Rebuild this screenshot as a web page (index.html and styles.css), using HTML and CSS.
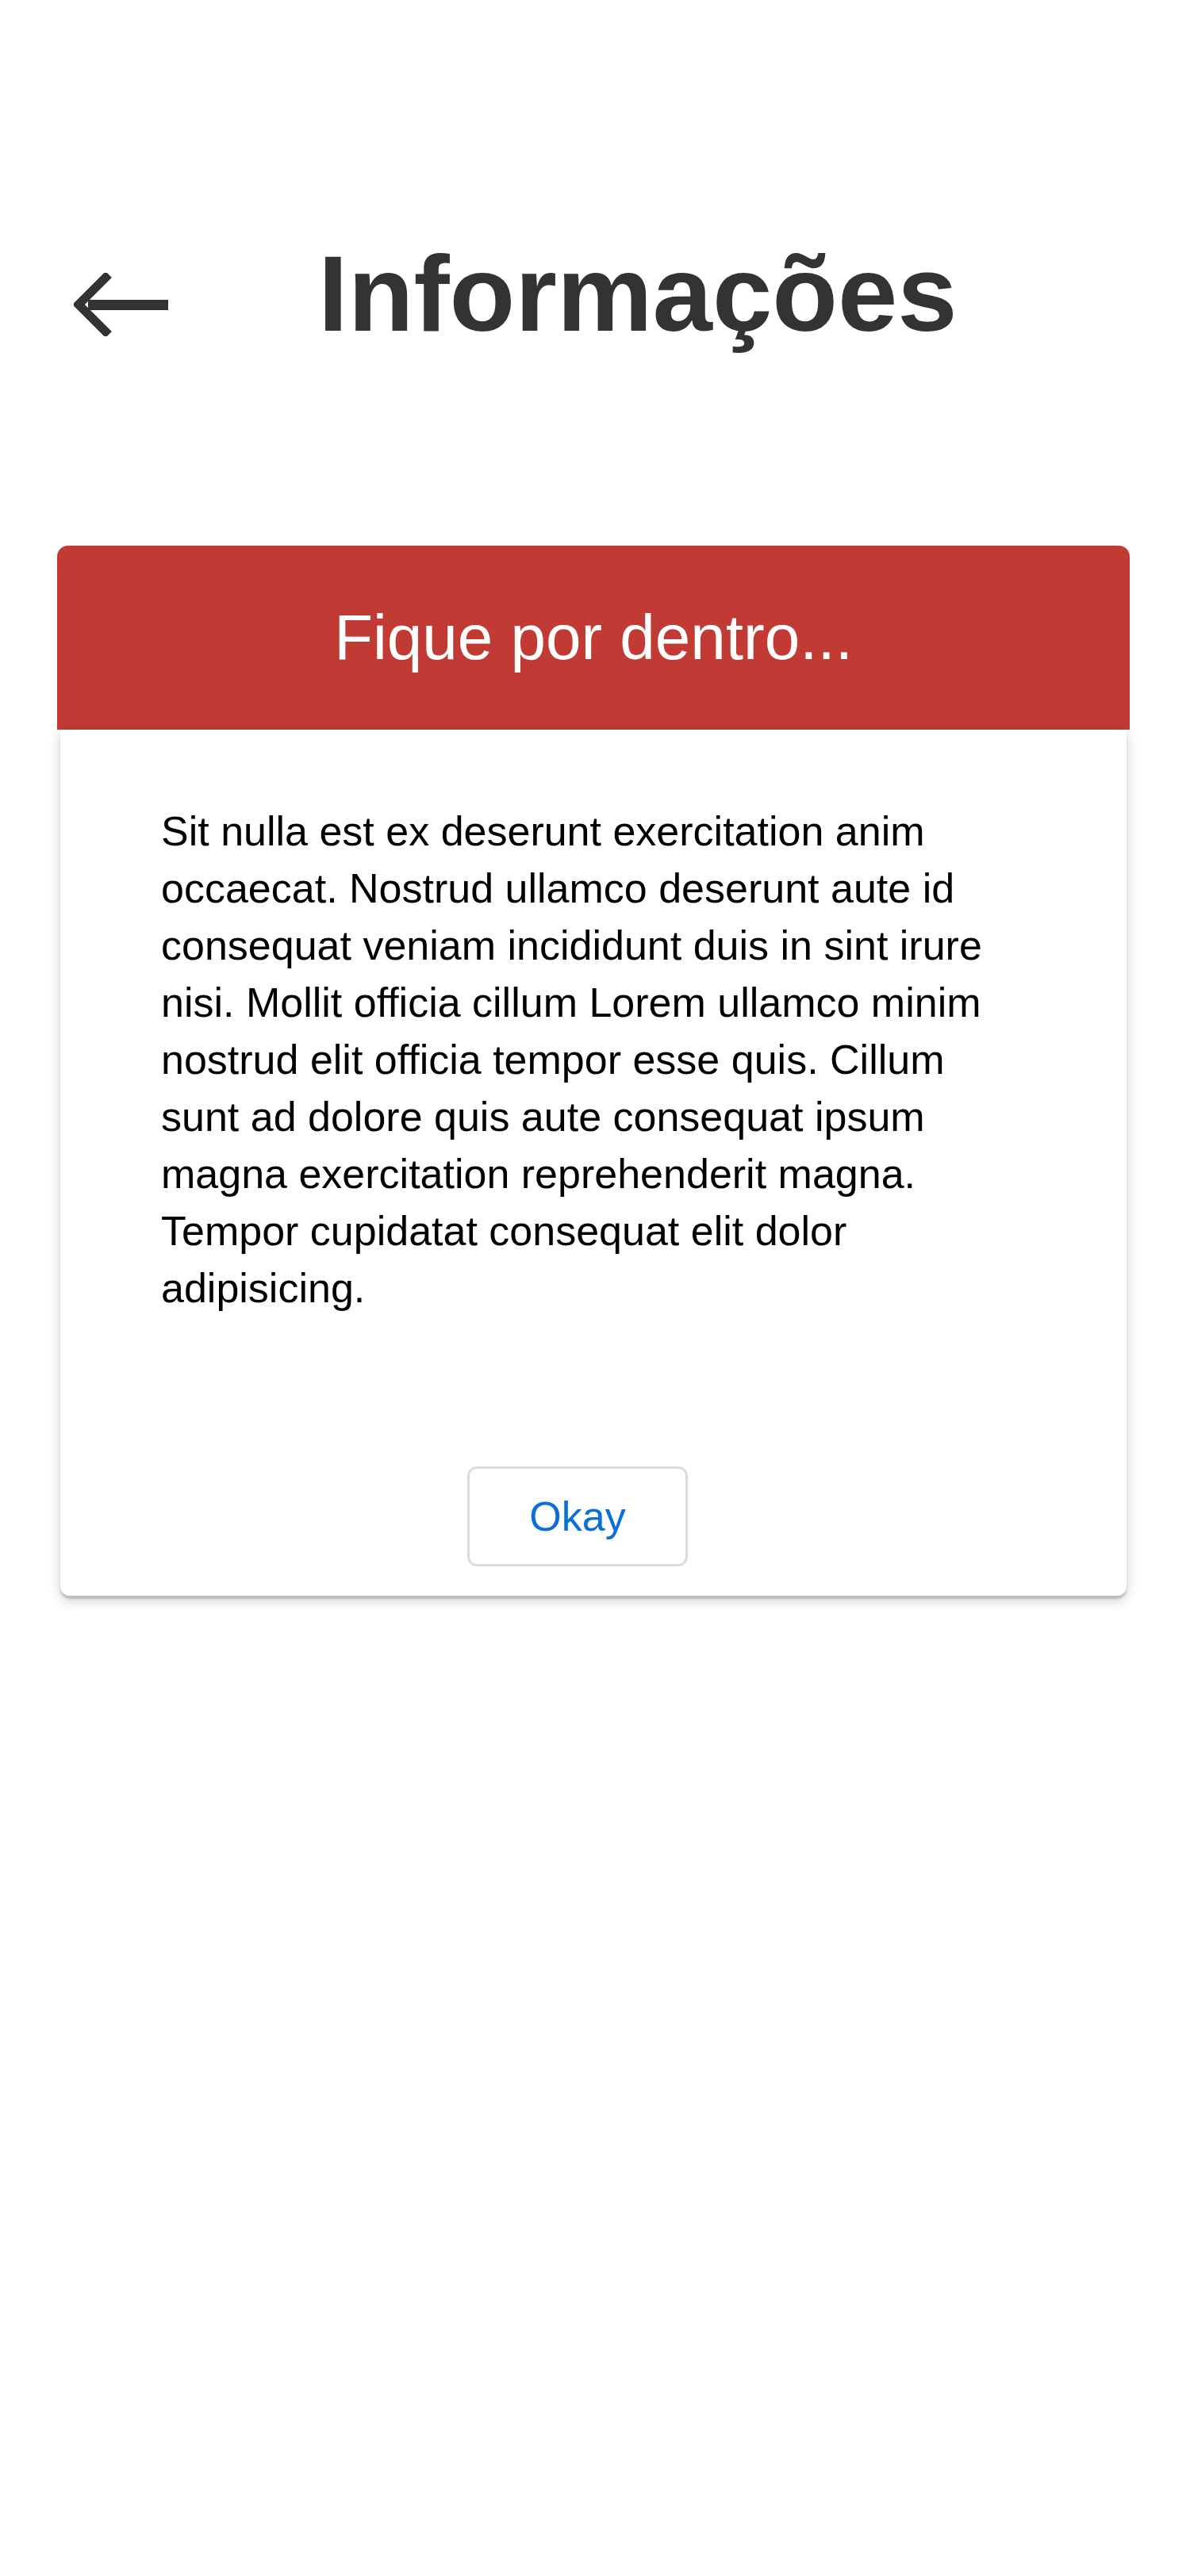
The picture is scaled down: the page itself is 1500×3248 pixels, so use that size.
FILE: index.html
```html
<!DOCTYPE html>
<html lang="pt">
<head>
<meta charset="utf-8">
<title>Informações</title>
<link rel="stylesheet" href="styles.css">
</head>
<body>
<header class="topbar">
  <button class="back" aria-label="Voltar">
    <svg width="120" height="80" viewBox="0 0 120 80">
      <polyline points="44,2 6,40 44,78" fill="none" stroke="#333" stroke-width="11" stroke-linejoin="miter"/>
      <rect x="18" y="34" width="101" height="13" fill="#333"/>
    </svg>
  </button>
  <h1 class="title">Informações</h1>
</header>

<section class="card">
  <div class="card-head">Fique por dentro...</div>
  <div class="card-body">
    <p class="card-text">Sit nulla est ex deserunt exercitation anim occaecat. Nostrud ullamco deserunt aute id consequat veniam incididunt duis in sint irure nisi. Mollit officia cillum Lorem ullamco minim nostrud elit officia tempor esse quis. Cillum sunt ad dolore quis aute consequat ipsum magna exercitation reprehenderit magna. Tempor cupidatat consequat elit dolor adipisicing.</p>
    <div class="card-foot">
      <button class="okay">Okay</button>
    </div>
  </div>
</section>
</body>
</html>
```

FILE: styles.css
```css
html, body {
  margin: 0;
  padding: 0;
  background: #ffffff;
}

body {
  font-family: "Liberation Sans", Arial, sans-serif;
  width: 1500px;
  min-height: 3248px;
}

.topbar {
  display: flex;
  align-items: flex-start;
  padding: 295px 0 0 93px;
}

.back {
  margin: 49px 0 0 0;
  padding: 0;
  border: 0;
  background: none;
  width: 120px;
  height: 80px;
  display: block;
}

.back svg {
  display: block;
}

.title {
  margin: 0 0 0 188px;
  font-size: 135.5px;
  line-height: 150px;
  font-weight: 700;
  color: #333333;
}

.card {
  margin: 243px 0 0 72px;
  width: 1352px;
}

.card-head {
  background: #c13a34;
  color: #ffffff;
  height: 232px;
  line-height: 232px;
  font-size: 80px;
  text-align: center;
  border-radius: 14px 14px 0 0;
  box-shadow: 0 0 6px rgba(0, 0, 0, 0.06);
}

.card-body {
  margin: 0 4px;
  background: #ffffff;
  border-radius: 0 0 12px 12px;
  padding: 92px 127px 37px;
  box-shadow: 0 4px 2px rgba(0, 0, 0, 0.14), 0 6px 16px rgba(0, 0, 0, 0.2);
}

.card-text {
  margin: 0;
  font-size: 52px;
  line-height: 72px;
  color: #000000;
}

.card-foot {
  display: flex;
  justify-content: center;
  padding-right: 40px;
  margin-top: 189px;
}

.okay {
  width: 278px;
  height: 126px;
  border: 3px solid #dcdcdc;
  border-radius: 12px;
  background: #ffffff;
  color: #0b70d6;
  font-family: "Liberation Sans", Arial, sans-serif;
  font-size: 52px;
  padding: 0;
}
```
